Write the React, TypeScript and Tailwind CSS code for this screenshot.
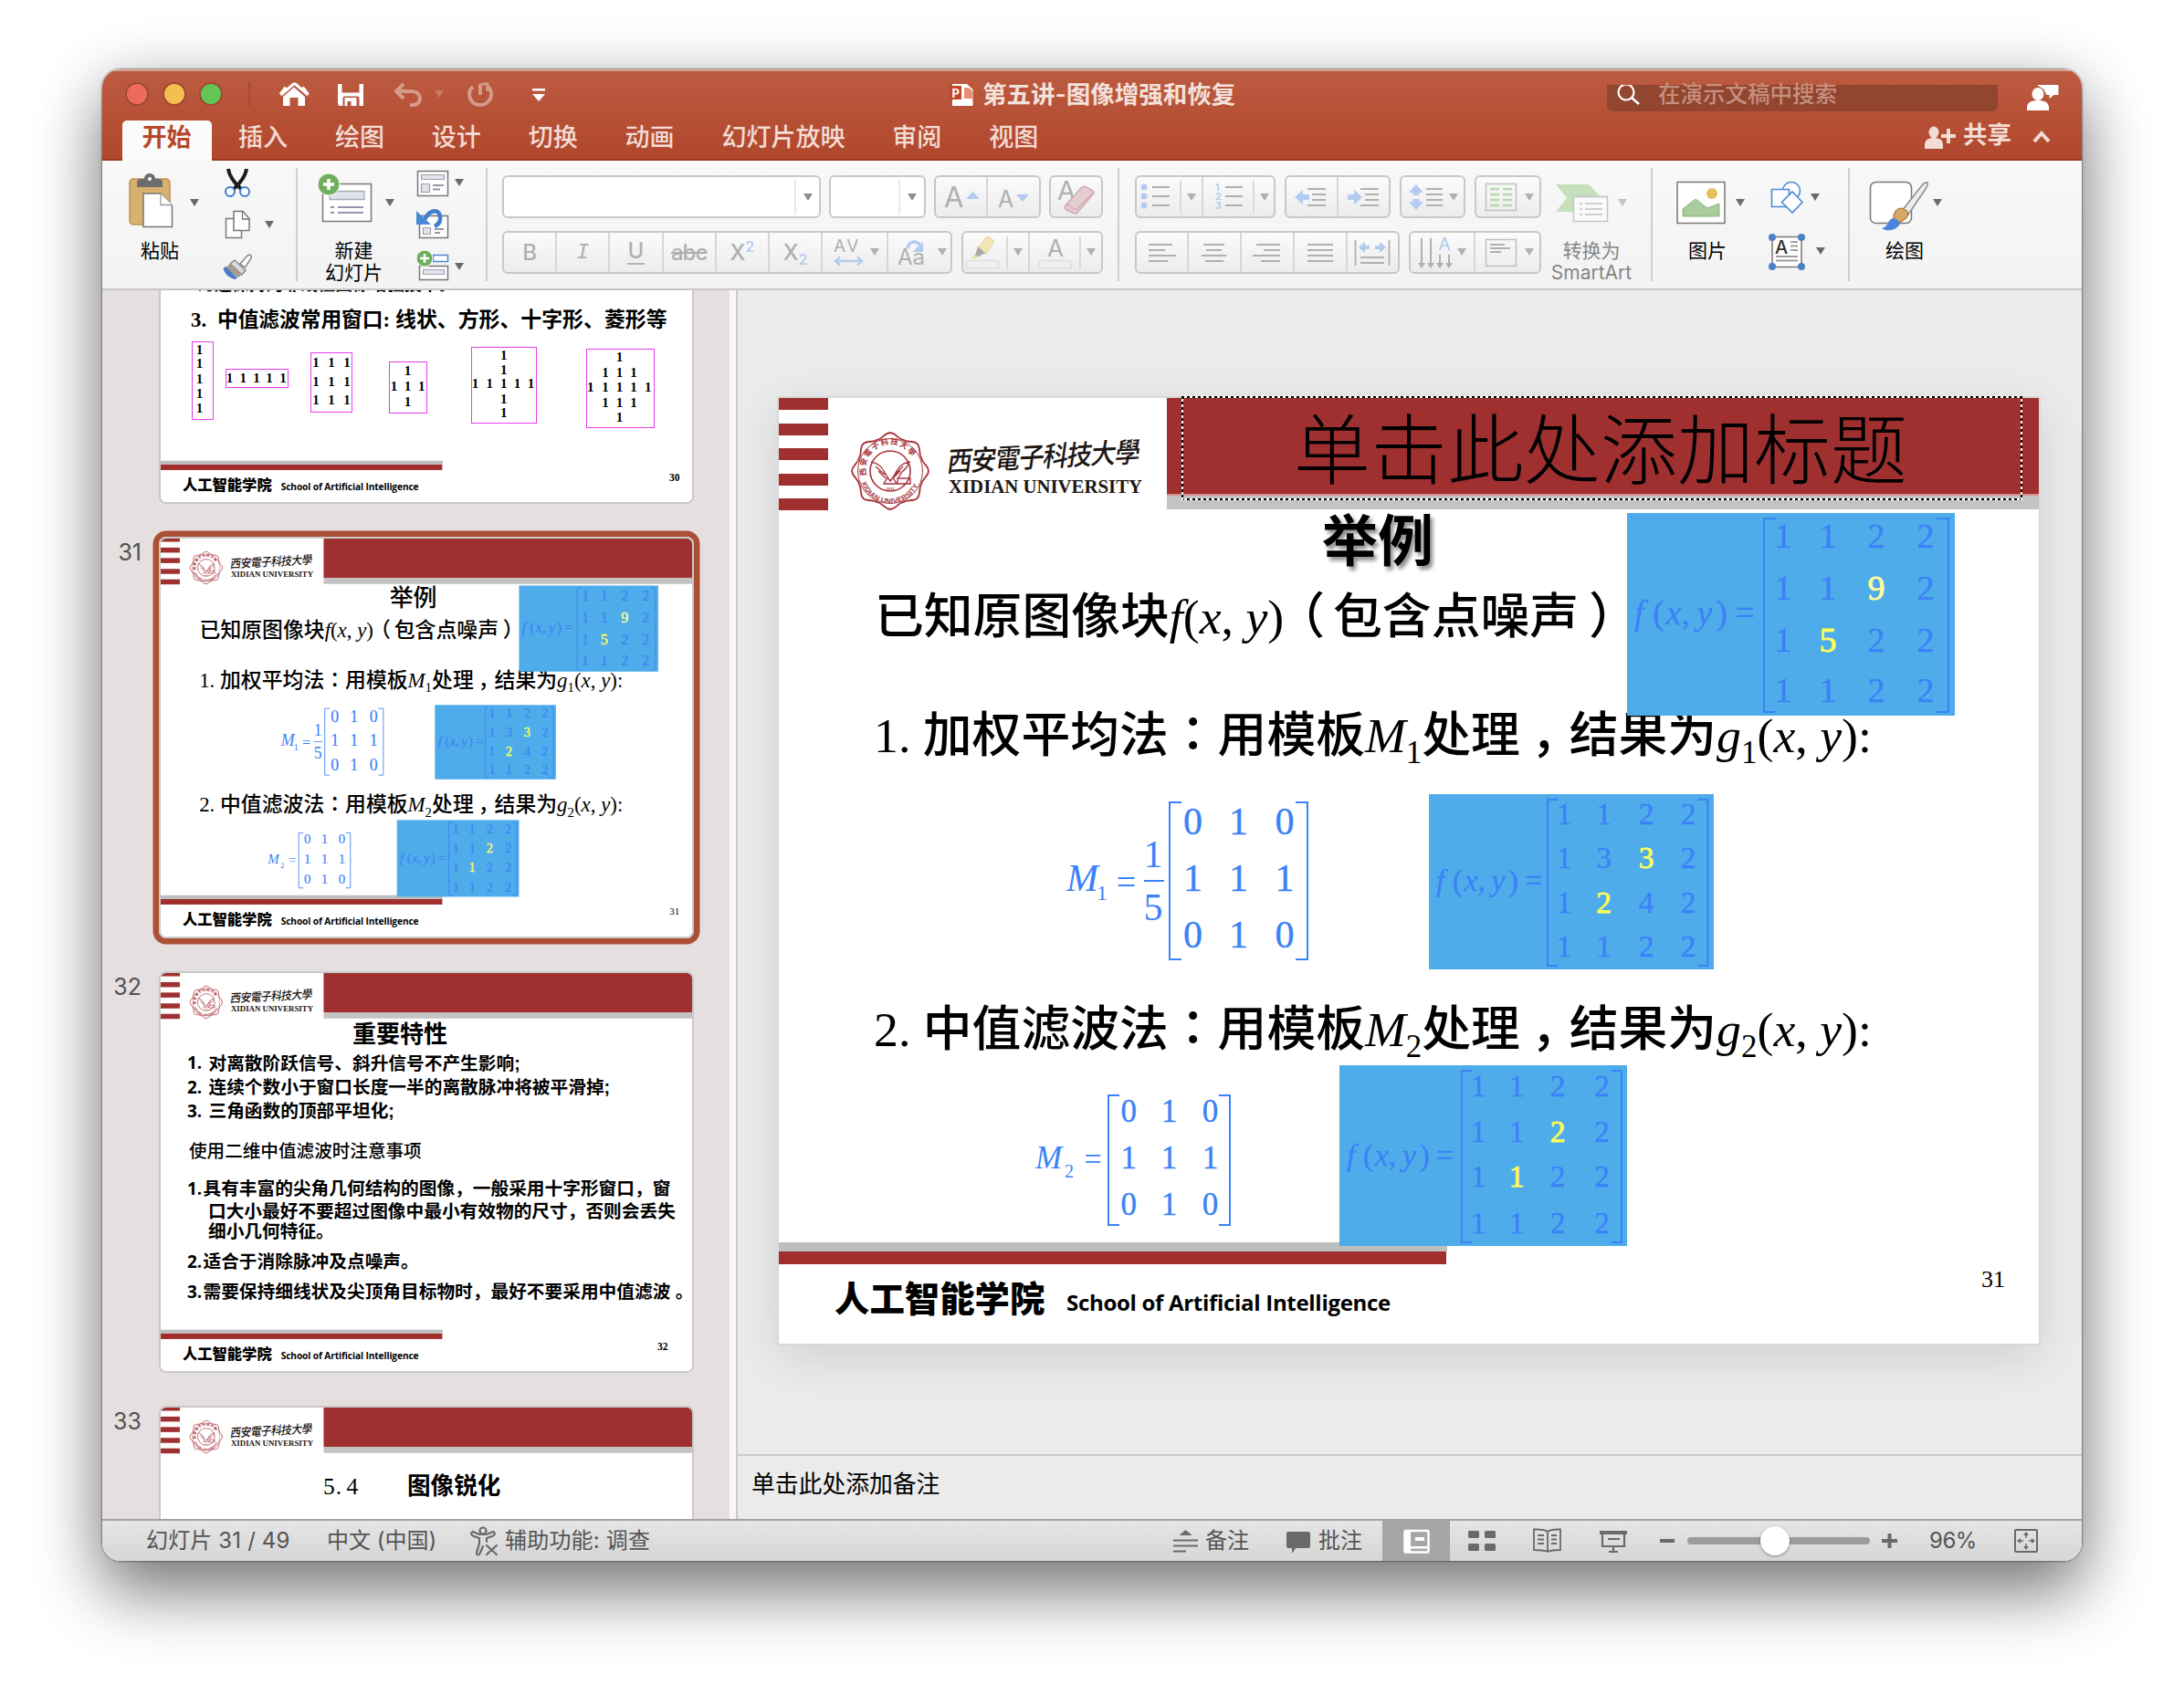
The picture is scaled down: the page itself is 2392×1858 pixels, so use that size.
import React from "react";

type Kids = { children?: React.ReactNode };

const SERIF = "font-['Liberation_Serif','Noto_Sans_CJK_SC',serif]";
const SANS = "font-['Liberation_Sans','Noto_Sans_CJK_SC',sans-serif]";
const UI = "font-['Inter','Noto_Sans_CJK_SC',sans-serif]";

/* ---------- helpers ---------- */

/** Icon whose view box is given in window coordinates. */
function Ic({ x, y, w, h, className = "", children }: Kids & { x: number; y: number; w: number; h: number; className?: string }) {
  return (
    <svg width={w} height={h} viewBox={`${x} ${y} ${w} ${h}`} className={`block shrink-0 ${className}`} fill="none">
      {children}
    </svg>
  );
}

function Tri({ x, y, s = 5, fill = "#6b6b6b" }: { x: number; y: number; s?: number; fill?: string }) {
  return <path d={`M${x - s} ${y - s + 1}h${s * 2}l${-s} ${s * 1.6}z`} fill={fill} />;
}

/** Text placed on the slide by its baseline. */
function Tx({ x, b, s, className = "", children }: Kids & { x: number; b: number; s: number; className?: string }) {
  return (
    <div className={`absolute whitespace-pre leading-none ${SERIF} ${className}`} style={{ left: x, top: b - s * 0.8375, fontSize: s }}>
      {children}
    </div>
  );
}

/** Text placed on the slide by its vertical centre. */
function Ct({ x, c, s, className = "", children }: Kids & { x: number; c: number; s: number; className?: string }) {
  return (
    <div className={`absolute whitespace-pre leading-none ${SANS} ${className}`} style={{ left: x, top: c - s * 0.4665, fontSize: s }}>
      {children}
    </div>
  );
}

/** A digit centred on a point. */
function Dg({ x, y, s, className = "", children }: Kids & { x: number; y: number; s: number; className?: string }) {
  return (
    <span
      className={`absolute -translate-x-1/2 -translate-y-1/2 leading-none font-['Liberation_Serif',serif] ${className}`}
      style={{ left: x, top: y, fontSize: s }}
    >
      {children}
    </span>
  );
}

/* ---------- slide content ---------- */

type MatrixProps = {
  rows: string[];
  xs: number[];
  ys: number[];
  s: number;
  box: [number, number, number, number];
  tick: number;
  marks?: Record<string, string>;
};

function Matrix({ rows, xs, ys, s, box, tick, marks = {} }: MatrixProps) {
  const [l, t, r, b] = box;
  return (
    <>
      <svg className="absolute overflow-visible" style={{ left: l, top: t }} width={r - l} height={b - t} fill="none" stroke="#3b82f7" strokeWidth="2">
        <path d={`M${tick} 1H1V${b - t - 1}H${tick}M${r - l - tick} 1H${r - l - 1}V${b - t - 1}H${r - l - tick}`} />
      </svg>
      {rows.map((row, j) =>
        row.split("").map((d, i) => (
          <Dg key={`${i}-${j}`} x={xs[i]} y={ys[j]} s={s} className={marks[`${i}${j}`] ?? "text-[#3b82f7] [-webkit-text-stroke:0.4px_#3b82f7]"}>
            {d}
          </Dg>
        )),
      )}
    </>
  );
}

function FXY({ x, b, s }: { x: number; b: number; s: number }) {
  return (
    <Tx x={x} b={b} s={s} className="text-[#3b82f7] [-webkit-text-stroke:0.3px_#3b82f7]">
      <i>f</i>
      <span className="ml-[0.25em]">(</span>
      <i className="ml-[0.05em]">x</i>
      <span>,</span>
      <i className="ml-[0.2em]">y</i>
      <span className="ml-[0.1em]">)</span>
      <span className="ml-[0.22em]">=</span>
    </Tx>
  );
}

function Seal() {
  const petals = Array.from({ length: 8 }, (_, k) => {
    const a = (k * Math.PI) / 4 - Math.PI / 2;
    const m = a + Math.PI / 8;
    const n = a + Math.PI / 4;
    const p = (r: number, t: number) => `${(43 + r * Math.cos(t)).toFixed(1)} ${(43 + r * Math.sin(t)).toFixed(1)}`;
    return `${k === 0 ? `M${p(42, a)}` : ""}C${p(42, a + 0.16)} ${p(36, m - 0.16)} ${p(37, m)}C${p(36, m + 0.16)} ${p(42, n - 0.16)} ${p(42, n)}`;
  }).join("");
  return (
    <svg className="absolute left-[79px] top-[37px]" width="86" height="86" viewBox="0 0 86 86" fill="none" stroke="#a8353b">
      <path d={petals} strokeWidth="1.8" />
      <circle cx="43" cy="43" r="35.5" strokeWidth="1" />
      <circle cx="43" cy="43" r="22" strokeWidth="1.6" />
      <path
        d="M22 33c6 1 11 4 14 10l4 7-4 7h14l-4-7 4-7c3-6 8-9 14-10l-3 6-5 5-5 8M27 38l10 9M30 43l8 8M57 38l-9 9M54 43l-7 7M40 50l3 4 3-4M51 51h14v6H51z"
        strokeWidth="1.4"
      />
      <defs>
        <path id="sealTop" d="M17 48a27 27 0 1 1 52 0" />
        <path id="sealBottom" d="M9.500 45a33.500 33.500 0 0 0 67 0" />
      </defs>
      <g fill="#a8353b" stroke="none">
        <text fontSize="8.500" fontWeight="700" fontFamily="'Noto Sans CJK TC',sans-serif" textLength="78">
          <textPath href="#sealTop">西安電子科技大學</textPath>
        </text>
        <text fontSize="7.800" fontWeight="700" fontFamily="'Liberation Sans',sans-serif" textLength="80">
          <textPath href="#sealBottom" startOffset="11">
            XIDIAN UNIVERSITY
          </textPath>
        </text>
        <text x="43" y="63.500" fontSize="4.500" fontWeight="700" textAnchor="middle" fontFamily="'Liberation Serif',serif">
          1931
        </text>
      </g>
    </svg>
  );
}

/** Slide master: header band, logo and footer on a 1380 x 1036 canvas. */
function Master({ children }: Kids) {
  return (
    <div className="relative h-[1036px] w-[1380px] overflow-hidden bg-white text-black">
      <div className="absolute left-0 top-0 flex w-[54px] flex-col gap-[14.5px]">
        {[0, 1, 2, 3, 4].map((k) => (
          <div key={k} className="h-[13px] bg-[#a03030]" />
        ))}
      </div>
      <Seal />
      <div className="absolute left-[185px] top-[41px] origin-center -skew-x-12 -rotate-3 scale-y-110 whitespace-nowrap font-['Noto_Sans_CJK_TC',sans-serif] text-[27.5px] font-medium leading-[42px] tracking-[-1.2px] text-[#1c1614]">
        西安電子科技大學
      </div>
      <Tx x={186} b={104.5} s={20.8} className="font-bold text-[#1c1614]">
        XIDIAN UNIVERSITY
      </Tx>
      <div className="absolute left-[425px] right-0 top-0 h-[106px] bg-[#a03030]" />
      <div className="absolute left-[425px] right-0 top-[106px] h-4 bg-[#c3c3c3]" />
      <div className="absolute left-0 top-[925px] h-2.5 w-[732px] bg-[#bebebe]" />
      <div className="absolute left-0 top-[935px] h-3.5 w-[731px] bg-[#a02e2c]" />
      <Ct x={61} c={986.5} s={38.4} className="font-black">
        人工智能学院
      </Ct>
      <div className="absolute left-[315px] top-[973px] whitespace-nowrap font-['Open_Sans',sans-serif] text-[24px] font-bold leading-[36px] tracking-[-0.3px]">
        School of Artificial Intelligence
      </div>
      {children}
    </div>
  );
}

function Sub({ children }: Kids) {
  return <span className="relative top-[12px] text-[35px] leading-none">{children}</span>;
}

function Line({ n, name, b }: { n: number; name: string; b: number }) {
  return (
    <Tx x={104} b={b} s={53.8} className="font-medium">
      {n}. {name}
      <span className="font-['Noto_Sans_CJK_TC',sans-serif] leading-[0]">：</span>用模板<i>M</i>
      <Sub>{n}</Sub>处理<span className="relative left-[12px]">，</span>结果为<i>g</i>
      <Sub>{n}</Sub>(<i>x</i>, <i>y</i>):
    </Tx>
  );
}

function Slide31({ editing = false }: { editing?: boolean }) {
  return (
    <Master>
      <Ct x={595} c={156.5} s={61} className={editing ? "font-bold [text-shadow:3px_4px_4px_rgba(0,0,0,0.45)]" : "font-medium"}>
        举例
      </Ct>
      <Tx x={105} b={259} s={53.8} className="font-medium">
        已知原图像块<i>f</i>(<i>x</i>, <i>y</i>)<span className="relative left-[-9px]">（</span>包含点噪声<span className="relative left-[11px]">）</span>
      </Tx>
      <Line n={1} name="加权平均法" b={389} />
      <Line n={2} name="中值滤波法" b={711} />

      <div className="absolute left-[929px] top-[126px] h-[222px] w-[359px] bg-[#4facea]" />
      <FXY x={937} b={248} s={38} />
      <Matrix
        rows={["1122", "1192", "1522", "1122"]}
        xs={[1100, 1149, 1202, 1256]}
        ys={[151, 208, 264.7, 320]}
        s={38}
        box={[1078, 131, 1282, 345]}
        tick={14}
        marks={{ "21": "text-[#ffff99] [-webkit-text-stroke:0.8px_#ffff99]", "12": "text-[#ffff55] [-webkit-text-stroke:0.8px_#ffff55]" }}
      />

      <div className="absolute left-[712px] top-[434px] h-[192px] w-[312px] bg-[#4facea]" />
      <FXY x={720} b={540} s={33.5} />
      <Matrix
        rows={["1122", "1332", "1242", "1122"]}
        xs={[860, 903.5, 950, 996]}
        ys={[456, 504.4, 553.4, 601]}
        s={33.5}
        box={[841, 439, 1018.5, 623]}
        tick={12}
        marks={{ "21": "text-[#ffff55] [-webkit-text-stroke:0.8px_#ffff55]", "12": "text-[#ffff55] [-webkit-text-stroke:0.8px_#ffff55]" }}
      />

      <div className="absolute left-[614px] top-[731px] h-[198px] w-[315px] bg-[#4facea]" />
      <FXY x={622} b={841.5} s={33.8} />
      <Matrix
        rows={["1122", "1122", "1122", "1122"]}
        xs={[766, 808, 853, 901.5]}
        ys={[754, 803.6, 853.4, 903.6]}
        s={33.5}
        box={[747, 736, 924, 926]}
        tick={12}
        marks={{ "21": "text-[#ffff55] [-webkit-text-stroke:0.8px_#ffff55]", "12": "text-[#ffff55] [-webkit-text-stroke:0.8px_#ffff55]" }}
      />

      <Tx x={315} b={540} s={42} className="text-[#3b82f7] italic">
        M
      </Tx>
      <Dg x={354} y={542} s={24} className="text-[#3b82f7]">
        1
      </Dg>
      <Dg x={380.5} y={530} s={38} className="text-[#3b82f7]">
        =
      </Dg>
      <Dg x={410} y={500} s={42} className="text-[#3b82f7]">
        1
      </Dg>
      <Dg x={410} y={558} s={42} className="text-[#3b82f7]">
        5
      </Dg>
      <div className="absolute left-[400px] top-[528px] h-[2px] w-[22px] bg-[#3b82f7]" />
      <Matrix rows={["010", "111", "010"]} xs={[453.6, 503.6, 554]} ys={[464, 525.7, 588]} s={42} box={[427, 442, 580, 616]} tick={14} />

      <Tx x={281} b={844} s={35} className="text-[#3b82f7] italic">
        M
      </Tx>
      <Dg x={318} y={847} s={20} className="text-[#3b82f7]">
        2
      </Dg>
      <Dg x={344} y={834} s={34} className="text-[#3b82f7]">
        =
      </Dg>
      <Matrix rows={["010", "111", "010"]} xs={[383.3, 427.4, 472.4]} ys={[781.3, 832.3, 883.3]} s={35} box={[360, 763, 495, 907]} tick={13} />

      <Tx x={1317} b={975} s={26}>
        31
      </Tx>

      {editing && (
        <>
          <div className="absolute left-[425px] right-0 top-[105px] h-[2px] bg-[#d98f8f]" />
          <Ct x={564} c={56} s={84} className="font-light">
            单击此处添加标题
          </Ct>
        </>
      )}
    </Master>
  );
}

function Placeholder() {
  return (
    <div className="absolute left-[441px] top-[-2px] h-[114px] w-[921px]">
      <div className="absolute inset-x-0 top-0 h-[2px] bg-[repeating-linear-gradient(90deg,#000_0_3px,#fff_3px_6px)]" />
      <div className="absolute inset-x-0 bottom-0 h-[2px] bg-[repeating-linear-gradient(90deg,#000_0_3px,#fff_3px_6px)]" />
      <div className="absolute inset-y-0 left-0 w-[2px] bg-[repeating-linear-gradient(180deg,#000_0_3px,#fff_3px_6px)]" />
      <div className="absolute inset-y-0 right-0 w-[2px] bg-[repeating-linear-gradient(180deg,#000_0_3px,#fff_3px_6px)]" />
    </div>
  );
}

function Thumb({ n, selected = false, slide, children }: Kids & { n: string; selected?: boolean; slide?: React.ReactNode }) {
  return (
    <div className="flex h-[440px] shrink-0">
      <div className={`w-[62px] pr-[19px] pt-[4px] text-right text-[25px] leading-[26px] text-[#545050] ${UI}`}>{n}</div>
      <div className={selected ? "relative rounded-[8px] shadow-[0_0_0_6.5px_#ac5035]" : "relative rounded-[8px]"}>
        <div className="relative h-[440px] w-[586px] overflow-hidden rounded-[8px] border-2 border-[#c9c9c9] bg-white">
          <div className="absolute -left-[2px] -top-[2px] h-[1036px] w-[1380px] origin-top-left scale-[0.4246]">{slide ?? <Master />}</div>
          {children}
        </div>
      </div>
    </div>
  );
}

const WINDOWS: { box: [number, number, number, number]; pts: [number, number][] }[] = [
  { box: [34, 260, 58, 346], pts: [[42.5, 268.7], [42.5, 284.3], [42.5, 301.3], [42.5, 317], [42.5, 333]] },
  { box: [71, 290, 140, 311], pts: [[75.5, 299.5], [90.2, 299.5], [105, 299.5], [119, 299.5], [134, 299.5]] },
  {
    box: [164, 272, 210, 338],
    pts: [170, 187, 204].flatMap((x) => [283.3, 303.7, 323.7].map((y) => [x, y] as [number, number])),
  },
  { box: [250, 282, 292, 339], pts: [[270.6, 292], [255.5, 309], [270.6, 309], [285.8, 309], [270.6, 326]] },
  {
    box: [340, 266, 412, 350],
    pts: [[375.8, 275], [375.8, 290.7], [344.6, 306.3], [360.2, 306.3], [375.8, 306.3], [390.5, 306.3], [405.6, 306.3], [375.8, 322.7], [375.8, 338.3]],
  },
  {
    box: [466, 268, 541, 355],
    pts: [
      [502.5, 277.3], [487, 294.3], [502.5, 294.3], [518, 294.3], [470.8, 310.3], [487, 310.3], [502.5, 310.3],
      [518, 310.3], [533.7, 310.3], [487, 327], [502.5, 327], [518, 327], [502.5, 342.7],
    ],
  },
];

function Slide30Body() {
  return (
    <>
      <Ct x={40} c={198} s={18.9} className="font-bold">
        为还保持的非线性图像增强技术。
      </Ct>
      <Tx x={33} b={245.500} s={22.8} className="font-bold">
        3.
      </Tx>
      <Tx x={62} b={245.500} s={22.7} className="font-bold">
        中值滤波常用窗口:
      </Tx>
      <Tx x={257} b={245.500} s={22.9} className="font-bold">
        线状、方形、十字形、菱形等
      </Tx>
      {WINDOWS.map((w, k) => (
        <React.Fragment key={k}>
          <div
            className="absolute border-[1.5px] border-[#e93cf0]"
            style={{ left: w.box[0], top: w.box[1], width: w.box[2] - w.box[0], height: w.box[3] - w.box[1] }}
          />
          {w.pts.map(([x, y], i) => (
            <Dg key={i} x={x} y={y} s={15} className="font-bold">
              1
            </Dg>
          ))}
        </React.Fragment>
      ))}
      <Tx x={557} b={414} s={11.5} className="font-bold">
        30
      </Tx>
    </>
  );
}

function Item({ n, x, c, children }: Kids & { n: string; x: number; c: number }) {
  return (
    <>
      <div className="absolute left-[29px] font-['Open_Sans',sans-serif] text-[19px] font-bold leading-none" style={{ top: c - 10 }}>
        {n}
      </div>
      <Ct x={x} c={c} s={19.7} className="font-bold">
        {children}
      </Ct>
    </>
  );
}

function Slide32Body() {
  return (
    <>
      <Ct x={210} c={66.5} s={26} className="font-bold">
        重要特性
      </Ct>
      <Item n="1." x={52.5} c={99}>对离散阶跃信号、斜升信号不产生影响;</Item>
      <Item n="2." x={52.5} c={125.5}>连续个数小于窗口长度一半的离散脉冲将被平滑掉;</Item>
      <Item n="3." x={52.5} c={151.5}>三角函数的顶部平坦化;</Item>
      <Ct x={31} c={195.5} s={19.6} className="font-medium">
        使用二维中值滤波时注意事项
      </Ct>
      <Item n="1." x={46.5} c={236.5}>具有丰富的尖角几何结构的图像，一般采用十字形窗口，窗</Item>
      <Ct x={52} c={261.5} s={19.7} className="font-bold">
        口大小最好不要超过图像中最小有效物的尺寸，否则会丢失
      </Ct>
      <Ct x={52} c={283.5} s={19.7} className="font-bold">
        细小几何特征。
      </Ct>
      <Item n="2." x={46.5} c={316.5}>适合于消除脉冲及点噪声。</Item>
      <Item n="3." x={46.5} c={349.5}>需要保持细线状及尖顶角目标物时，最好不要采用中值滤波 。</Item>
      <Tx x={544} b={414} s={11.5} className="font-bold">
        32
      </Tx>
    </>
  );
}

/* ---------- title bar and ribbon ---------- */

const TABS = ["插入", "绘图", "设计", "切换", "动画", "幻灯片放映", "审阅", "视图"];

function TitleBar() {
  return (
    <div className={`h-[100px] shrink-0 border-b-2 border-t-2 border-b-[#9a3a20] border-t-[#d9a08f] bg-linear-to-b from-[#bc5b40] to-[#b1472c] ${UI}`}>
      <div className="flex h-[50px] items-center">
        <div className="ml-[25px] flex w-[107px] justify-between">
          <div className="size-[26px] rounded-full border-2 border-[#9d4a33] bg-[#ed6a5f]" />
          <div className="size-[26px] rounded-full border-2 border-[#9d4a33] bg-[#f5bf4f]" />
          <div className="size-[26px] rounded-full border-2 border-[#9d4a33] bg-[#62c554]" />
        </div>
        <div className="ml-[28px] h-[26px] w-[2px] bg-[#a54a32]" />
        <Ic x={300} y={88} w={310} h={32} className="ml-[26px] mt-[2px]">
          <path d="M307.500 104l14-12h2l14 12M307 103.500l6-8M337.500 103.500l-6-8" stroke="#fff" strokeWidth="3" />
          <path d="M310 106l12-10.500L334 106v10h-7.500v-9h-9v9H310z" fill="#fff" />
          <path d="M370 92h4.500v9.500h19V92h4.500v24h-4.500v-8.500q0-2-2-2h-14q-2 0-2 2v8.500h-2.500q-3 0-3-3z" fill="#fff" />
          <path d="M377.500 107h13v9h-6v-5h-4v5h-3z" fill="#fff" />
          <g stroke="#d69a89" strokeWidth="4">
            <path d="M442 92l-8 8 8 8M435 100h15c13 0 13 15 2 15h-3" />
            <path d="M518 95c-8 7-3 20 8 20s17-14 7-21M526 92v12" />
          </g>
          <path d="M527 92h7v8" stroke="#d69a89" strokeWidth="3" />
          <path d="M476 99h10l-5 8z" fill="#c97a66" />
          <path d="M583 97h14v2.500h-14zM583 103h14l-7 8z" fill="#fff" />
        </Ic>
        <Ic x={1038} y={90} w={30} h={28} className="ml-[428px] mt-[2px]">
          <path d="M1043 92h16l6.500 6v18H1043z" fill="#fff" />
          <path d="M1056 96h3a6 6 0 0 1 6 6v6h-9z" fill="#e88d72" />
          <path d="M1040 94h13v15h-13z" fill="#c2452b" />
          <text x="1042.500" y="106.500" fontSize="13" fontWeight="700" fill="#fff" fontFamily="Inter,sans-serif">
            P
          </text>
        </Ic>
        <div className="ml-[8px] w-[290px] whitespace-nowrap text-[26.5px] font-semibold leading-none text-[#f3e1db]">第五讲-图像增强和恢复</div>
        <div className="ml-[394px] mt-[9px] flex h-[29px] w-[428px] items-center rounded-b-[6px] bg-[#92452f]">
          <Ic x={1770} y={92} w={26} h={26} className="ml-[10px] mt-[-3px]">
            <circle cx="1781" cy="100" r="8.500" stroke="#fff" strokeWidth="2.200" />
            <path d="M1787 106l8 7" stroke="#fff" strokeWidth="2.500" />
          </Ic>
          <span className="-mt-[9px] ml-[20px] whitespace-nowrap text-[24.5px] font-medium leading-none text-[#c68f80]">在演示文稿中搜索</span>
        </div>
        <Ic x={2216} y={90} w={42} h={32} className="ml-[28px] mt-[8px]">
          <path d="M2220 120v-3c0-6 5-8 12-8s12 2 12 8v3z" fill="#fff" />
          <ellipse cx="2232" cy="102" rx="6.500" ry="7" fill="#fff" />
          <path d="M2231 92h23.500v11h-5l-5 4v-4h-3l-3-6z" fill="#fff" />
        </Ic>
      </div>
      <div className="mt-[2px] flex h-[44px] items-start pl-[22px] text-[27px] leading-none text-[#f3dcd5]">
        <div className="mt-[2px] flex h-[44px] w-[98px] justify-center rounded-t-[5px] bg-[#fbfbfb] pr-[1px] pt-[5px] font-bold text-[#b7472a]">开始</div>
        <div className="ml-[29px] flex gap-[51.9px] pt-[7px] font-medium">
          {TABS.map((t) => (
            <span key={t} className="whitespace-nowrap">
              {t}
            </span>
          ))}
        </div>
        <div className="ml-auto flex items-center pr-[32px] pt-[4px]">
          <Ic x={2106} y={134} w={38} h={30}>
            <path d="M2108 163v-4c0-6 4-8 10-8s10 2 10 8v4z" fill="#f3dcd5" />
            <ellipse cx="2118" cy="145" rx="5.500" ry="6.500" fill="#f3dcd5" />
            <path d="M2126 149h16M2134 141v16" stroke="#f3dcd5" strokeWidth="4" />
          </Ic>
          <span className="-mt-[4px] ml-[6px] text-[26.5px] font-bold">共享</span>
          <Ic x={2224} y={140} w={24} h={22} className="ml-[21px]">
            <path d="M2228 157l8-9 8 9" stroke="#f3dcd5" strokeWidth="4" />
          </Ic>
        </div>
      </div>
    </div>
  );
}

function Sep() {
  return <div className="mt-[8px] h-[124px] w-[2px] shrink-0 bg-[#cfcfcf]" />;
}

function Box({ w, className = "", children }: Kids & { w: number; className?: string }) {
  return (
    <div
      className={`flex h-[47px] shrink-0 items-center overflow-hidden rounded-[6px] border-2 border-[#c8c8c8] bg-linear-to-b from-[#fbfbfb] to-[#ececec] ${className}`}
      style={{ width: w }}
    >
      {children}
    </div>
  );
}

function Key({ children, className = "" }: Kids & { className?: string }) {
  return (
    <span className={`flex h-full w-[58.2px] shrink-0 items-center justify-center border-r-2 border-[#d6d6d6] text-[24px] font-medium leading-none text-[#b0b0b0] ${className}`}>
      {children}
    </span>
  );
}

const G = "#b0b0b0";
const B = "#b3cbf0";

function Ribbon() {
  return (
    <div className={`flex h-[142px] shrink-0 border-b-2 border-[#c6c6c6] bg-linear-to-b from-[#f8f8f8] to-[#f3f3f3] text-[21px] leading-[24px] text-black ${UI}`}>
      {/* clipboard */}
      <div className="flex w-[212px] shrink-0">
        <div className="w-[120px] pt-[8px]">
          <Ic x={112} y={184} w={120} h={72}>
            <rect x="142" y="196" width="44" height="50" rx="4" fill="#d8b06f" stroke="#bf9350" strokeWidth="1.500" />
            <path d="M150 205v-5q0-4 5-4h3c0-8 12-8 12 0h3q5 0 5 4v5z" fill="#6d6d6d" />
            <circle cx="164" cy="196" r="2" fill="#fff" />
            <path d="M157 212h19l12.500 13v23.500H157z" fill="#fff" stroke="#777" strokeWidth="1.500" />
            <path d="M176 212v12.500h12.500" fill="#fff" stroke="#999" strokeWidth="1.300" />
            <Tri x={213} y={222} />
          </Ic>
          <div className="pl-[42px] pt-[7px]">粘贴</div>
        </div>
        <Ic x={240} y={180} w={64} h={130} className="ml-[8px] mt-[4px]">
          <path d="M250 185c1 8 5 12 9 17l9 9M270 185c-1 8-5 12-9 17l-9 9" stroke="#1c1c1c" strokeWidth="4" />
          <circle cx="252" cy="210" r="5" fill="#fff" stroke="#3f7acb" strokeWidth="2" />
          <circle cx="268" cy="210" r="5" fill="#fff" stroke="#3f7acb" strokeWidth="2" />
          <path d="M247.500 239.500h17v21h-17z" fill="#fff" stroke="#777" strokeWidth="1.500" />
          <path d="M256 231.500h10l7 8v13h-17z" fill="#fff" stroke="#777" strokeWidth="1.500" />
          <path d="M265.500 231.500v8.500h7.500" stroke="#777" strokeWidth="1.300" />
          <Tri x={295} y={246} />
          <path d="M263 289l8-9q4-2 4.500 2l-7 11z" fill="#fff" stroke="#888" strokeWidth="1.500" />
          <path d="M257 285l12 11-4 5-13-12z" fill="#d9d9d9" stroke="#8a8a8a" strokeWidth="1.500" />
          <path d="M252 289l13 12-4 3-14-11z" fill="#a79a90" />
          <path d="M247 292l13 12-2 2c-7-1-12-6-13.500-12z" fill="#4b7dc9" />
        </Ic>
      </div>
      <Sep />
      {/* slides */}
      <div className="flex w-[206px] shrink-0">
        <div className="w-[124px] pt-[8px]">
          <Ic x={326} y={184} w={124} h={72}>
            <path d="M353.500 201.500h53v41h-53z" fill="#fff" stroke="#777" strokeWidth="1.500" />
            <path d="M361 209.500h38v9h-38z" fill="#e1e3ea" stroke="#a9adba" strokeWidth="1.300" />
            <path d="M362 227h4M370 227h28M362 233h4M370 233h28" stroke="#9298ab" strokeWidth="2" />
            <circle cx="360" cy="202" r="12" fill="#6fae5c" stroke="#fff" strokeWidth="1" />
            <path d="M354 202h12M360 196v12" stroke="#fff" strokeWidth="3.500" />
            <Tri x={427} y={222} />
          </Ic>
          <div className="w-[123px] pt-[7px] text-center">
            新建
            <br />
            幻灯片
          </div>
        </div>
        <Ic x={450} y={180} w={64} h={130} className="mt-[4px]">
          <path d="M457.500 187.500h33v27h-33z" fill="#fff" stroke="#777" strokeWidth="1.500" />
          <path d="M461.500 191.500h25v5h-25zM461.500 201.500h9v9h-9z" fill="#e1e3ea" stroke="#9da2b0" strokeWidth="1.200" />
          <path d="M474 203h12M474 207.500h8" stroke="#9298ab" strokeWidth="2" />
          <Tri x={503} y={200} />
          <path d="M459.500 236.500h31v24h-31z" fill="#fff" stroke="#777" strokeWidth="1.500" />
          <path d="M463.500 249.500h8v7h-8z" fill="#e1e3ea" stroke="#9da2b0" strokeWidth="1.200" />
          <path d="M476 251h10M476 255h6" stroke="#9298ab" strokeWidth="2" />
          <path d="M465 241c4-10 15-14 17-4 1 6-2 9-6 11" stroke="#3f7fd0" strokeWidth="4.500" />
          <path d="M456 231v15h16z" fill="#4a88d8" />
          <path d="M474.500 279.500h16v7h-16z" fill="#fff" stroke="#4a88d8" strokeWidth="1.500" />
          <path d="M459.500 291.500h31v15h-31z" fill="#fff" stroke="#777" strokeWidth="1.500" />
          <path d="M463.500 295.500h23v5h-23z" fill="#e1e3ea" stroke="#9da2b0" strokeWidth="1.200" />
          <circle cx="465" cy="283" r="9" fill="#6fae5c" stroke="#fff" />
          <path d="M460 283h10M465 278v10" stroke="#fff" strokeWidth="2.500" />
          <Tri x={503} y={292} />
        </Ic>
      </div>
      <Sep />
      {/* font */}
      <div className="flex w-[690px] shrink-0 flex-col gap-[14px] pl-[16px] pt-[16px]">
        <div className="flex">
          <Box w={349} className="from-white to-white">
            <Ic x={870} y={193} w={27} h={46} className="ml-auto">
              <path d="M871 197v38" stroke="#e2e2e2" strokeWidth="1.500" />
              <Tri x={885} y={216} fill="#8d8d8d" />
            </Ic>
          </Box>
          <Box w={106} className="ml-[9px] from-white to-white">
            <Ic x={984} y={193} w={28} h={46} className="ml-auto">
              <path d="M985 197v38" stroke="#e2e2e2" strokeWidth="1.500" />
              <Tri x={999} y={216} fill="#8d8d8d" />
            </Ic>
          </Box>
          <Box w={117} className="ml-[9px]">
            <span className="ml-[9px] w-[21px] text-[31px] text-[#b0b0b0]">A</span>
            <Ic x={1055} y={194} w={27} h={44}>
              <path d="M1058 218l7.500-8 7.500 8z" fill={B} />
              <path d="M1081 194v44" stroke="#d6d6d6" strokeWidth="2" />
            </Ic>
            <span className="ml-[11px] mt-[5px] w-[18px] text-[25px] text-[#b0b0b0]">A</span>
            <Ic x={1111} y={194} w={20} h={44}>
              <path d="M1113 213h14l-7 8z" fill={B} />
            </Ic>
          </Box>
          <Box w={59} className="ml-[9px]">
            <Ic x={1151} y={194} w={55} h={44}>
              <text x="1158" y="219" fontSize="29" fill={G} fontFamily="Inter,sans-serif">
                A
              </text>
              <path d="M1167 225l17-19q3-3 6-1l7 4q2 2 0 4l-17 20q-2 2-5 0l-7-3q-3-2-1-5z" fill="#e6cdd2" stroke="#cfabb3" strokeWidth="1.500" />
              <path d="M1168 224l11 6 18-19" stroke="#cfabb3" strokeWidth="1.200" />
            </Ic>
          </Box>
        </div>
        <div className="flex">
          <Box w={493}>
            <Key className="font-bold">B</Key>
            <Key className="italic font-['Liberation_Mono',monospace]">I</Key>
            <Key>
              <span className="border-b-2 border-[#b3b3b3] px-[1px] pb-[1px]">U</span>
            </Key>
            <Key className="line-through text-[22px] tracking-[-1px]">abc</Key>
            <Key>
              X<span className="-mt-[14px] text-[16px] text-[#b3cbf0]">2</span>
            </Key>
            <Key>
              X<span className="mt-[14px] text-[16px] text-[#b3cbf0]">2</span>
            </Key>
            <Ic x={900} y={254} w={141} h={44}>
              <text x="912" y="275" fontSize="19" fill={G} fontFamily="Inter,sans-serif" letterSpacing="2.5">
                AV
              </text>
              <path d="M915 285h27M919 280.500l-5 4.500 5 4.500M938 280.500l5 4.500-5 4.500" stroke={B} strokeWidth="2.500" />
              <Tri x={957} y={275} fill={G} />
              <path d="M971 254v44" stroke="#d6d6d6" strokeWidth="2" />
              <text x="982" y="289" fontSize="24" fill={G} fontFamily="Inter,sans-serif">
                Aa
              </text>
              <path d="M993 271c1-8 11-10 15-1" stroke={B} strokeWidth="3.500" />
              <path d="M1010 264v11h-12z" fill={B} />
              <Tri x={1031} y={275} fill={G} />
            </Ic>
          </Box>
          <Box w={155} className="ml-[10px]">
            <Ic x={1055} y={254} w={151} h={44}>
              <path d="M1072 270l9-12 8 5-8 13-5 1z" fill="#f3e6b4" stroke="#ddcf9b" />
              <path d="M1071 269l8 7-7 4-4-1z" fill="#aaa" />
              <path d="M1067 278l5 3-8 1z" fill="#ecd98f" />
              <rect x="1058.500" y="284.500" width="35" height="8.500" rx="1.500" fill="#efefef" stroke="#dedede" strokeWidth="1.500" />
              <path d="M1103 258v36M1183 258v36" stroke="#dadada" strokeWidth="2" />
              <path d="M1127 254v44" stroke="#d6d6d6" strokeWidth="2" />
              <Tri x={1115} y={275} fill={G} />
              <Tri x={1195} y={275} fill={G} />
              <text x="1147" y="280" fontSize="26" fill={G} fontFamily="Inter,sans-serif">
                A
              </text>
              <rect x="1138.500" y="284.500" width="35" height="8.500" rx="1.500" fill="#efefef" stroke="#dedede" strokeWidth="1.500" />
            </Ic>
          </Box>
        </div>
      </div>
      <Sep />
      {/* paragraph */}
      <div className="flex w-[582px] shrink-0">
        <div className="flex w-[462px] flex-col gap-[14px] pl-[17px] pt-[16px]">
          <div className="flex">
            <Box w={154}>
              <Ic x={1245} y={194} w={150} h={44}>
                {[205, 215, 225].map((y) => (
                  <React.Fragment key={y}>
                    <circle cx="1253" cy={y} r="3.500" fill={B} />
                    <path d={`M1262 ${y}h19M1342 ${y}h19`} stroke={G} strokeWidth="2" />
                  </React.Fragment>
                ))}
                <g fontSize="10.500" fontWeight="700" fill={B} fontFamily="Inter,sans-serif">
                  <text x="1331" y="209">1</text>
                  <text x="1331" y="219">2</text>
                  <text x="1331" y="229">3</text>
                </g>
                <path d="M1293 198v36M1373 198v36" stroke="#dadada" strokeWidth="2" />
                <path d="M1317 194v44" stroke="#d6d6d6" strokeWidth="2" />
                <Tri x={1305} y={216} fill={G} />
                <Tri x={1385} y={216} fill={G} />
              </Ic>
            </Box>
            <Box w={116} className="ml-[10px]">
              <Ic x={1409} y={194} w={112} h={44}>
                <path d="M1432 207h20M1437 213h15M1437 219h15M1432 225h20M1490 207h20M1495 213h15M1495 219h15M1490 225h20" stroke={G} strokeWidth="2" />
                <path d="M1418 216l9-8v5h7v6h-7v5zM1492 216l-9-8v5h-7v6h7v5z" fill={B} />
                <path d="M1465 194v44" stroke="#d6d6d6" strokeWidth="2" />
              </Ic>
            </Box>
            <Box w={72} className="ml-[10px]">
              <Ic x={1535} y={194} w={68} h={44}>
                <path d="M1543 211l8-9 8 9h-4.500v3h-7v-3zM1543 221l8 9 8-9h-4.500v-3h-7v3z" fill={B} />
                <path d="M1562 207h18M1562 213h18M1562 219h18M1562 225h18" stroke={G} strokeWidth="2" />
                <Tri x={1592} y={216} fill={G} />
              </Ic>
            </Box>
            <Box w={73} className="ml-[10px]">
              <Ic x={1617} y={194} w={69} h={44}>
                <path d="M1627.500 201.500h33v29h-33z" stroke="#c0c0c0" strokeWidth="1.500" />
                <path d="M1632 207h10M1632 213h10M1632 219h10M1632 225h10M1646 207h10M1646 213h10M1646 219h10M1646 225h10" stroke="#b9d8ae" strokeWidth="2.500" />
                <Tri x={1675} y={216} fill={G} />
              </Ic>
            </Box>
          </div>
          <div className="flex">
            <Box w={290}>
              <Ic x={1245} y={254} w={286} h={44}>
                <path
                  d="M1258 267h26M1258 273h18M1258 279h30M1258 285h21M1318 267h23M1321 273h17M1316 279h27M1320 285h20M1376 267h26M1384 273h18M1372 279h30M1381 285h21M1432 267h28M1432 273h28M1432 279h28M1432 285h28M1490 281h26M1490 287h26"
                  stroke={G}
                  strokeWidth="2"
                />
                <path d="M1484.500 262v28M1521.500 262v28" stroke={G} strokeWidth="1.800" />
                <path d="M1488 270l7-6v4h5v4h-5v4zM1518 270l-7-6v4h-5v4h5v4z" fill={B} />
                <path d="M1301 254v44M1359 254v44M1417 254v44M1475 254v44" stroke="#d6d6d6" strokeWidth="2" />
              </Ic>
            </Box>
            <Box w={145} className="ml-[10px]">
              <Ic x={1545} y={254} w={141} h={44}>
                <path d="M1557 260v30M1567 260v30M1577 278v12M1587 278v12" stroke={G} strokeWidth="2" />
                <path d="M1553 287h8l-4 6zM1563 287h8l-4 6zM1573 287h8l-4 6zM1583 287h8l-4 6z" fill={G} />
                <text x="1575.500" y="273" fontSize="19" fill={B} fontFamily="Inter,sans-serif">
                  A
                </text>
                <Tri x={1601} y={275} fill={G} />
                <path d="M1615 254v44" stroke="#d6d6d6" strokeWidth="2" />
                <path d="M1627.500 261.500h33v29h-33z" stroke="#c0c0c0" strokeWidth="1.500" />
                <path d="M1632 267h16M1632 271h22M1632 275h12" stroke={G} strokeWidth="2" />
                <Tri x={1675} y={275} fill={G} />
              </Ic>
            </Box>
          </div>
        </div>
        <div className="w-[120px] pt-[8px] text-[#858585]">
          <Ic x={1688} y={184} w={120} h={72}>
            <path d="M1704 202h36l13 14v16h-49l12-15z" fill="#c6dfbd" />
            <path d="M1723.500 215.500h37v27h-37z" fill="#fafafa" stroke="#c4c4c4" strokeWidth="1.500" />
            <path d="M1730 223h3M1736 223h19M1730 229h3M1736 229h19M1730 235h3M1736 235h19" stroke="#cfcfcf" strokeWidth="2" />
            <Tri x={1777} y={222} fill="#c2c2c2" />
          </Ic>
          <div className="w-[110px] pt-[7px] text-center">
            转换为
            <br />
            <span>SmartArt</span>
          </div>
        </div>
      </div>
      <Sep />
      {/* insert */}
      <div className="flex w-[214px] shrink-0">
        <div className="w-[118px] pt-[8px]">
          <Ic x={1810} y={184} w={118} h={72}>
            <path d="M1837 199.500h52v45h-52z" fill="#fff" stroke="#777" strokeWidth="1.500" />
            <path d="M1843 237v-8l14-11 13 10 13-5v14z" fill="#a9cc9c" stroke="#8ab37c" strokeWidth="1" />
            <circle cx="1875" cy="212" r="6" fill="#e6c15a" />
            <Tri x={1906} y={222} />
          </Ic>
          <div className="pl-[39px] pt-[7px]">图片</div>
        </div>
        <Ic x={1930} y={184} w={76} h={120} className="ml-[2px] mt-[8px]">
          <circle cx="1962" cy="209" r="9.500" fill="#fff" stroke="#4a88d8" strokeWidth="1.600" />
          <path d="M1940.500 207.500h19v19h-19z" fill="#fff" stroke="#4a88d8" strokeWidth="1.600" />
          <path d="M1963 210l11 11.500-11 11.500-11.500-11.500z" fill="#fff" stroke="#4a88d8" strokeWidth="1.600" />
          <Tri x={1988} y={216} />
          <path d="M1941 259.500h32v33h-32z" fill="#fff" stroke="#777" strokeWidth="1.500" />
          <text x="1944" y="278" fontSize="20" fontWeight="500" fill="#333" fontFamily="Inter,sans-serif">
            A
          </text>
          <path d="M1961 265h8M1961 269.500h8M1961 274h8M1945 281h24M1945 285.500h24" stroke="#a0a0a0" strokeWidth="1.800" />
          <g fill="#4c7fc4">
            <circle cx="1941" cy="260" r="4" />
            <circle cx="1973" cy="260" r="4" />
            <circle cx="1941" cy="292" r="4" />
            <circle cx="1973" cy="292" r="4" />
          </g>
          <Tri x={1994} y={275} />
        </Ic>
      </div>
      <Sep />
      {/* draw */}
      <div className="w-[130px] pt-[8px]">
        <Ic x={2026} y={184} w={130} h={72}>
          <rect x="2048.500" y="199.500" width="45" height="45" rx="6" fill="#fff" stroke="#777" strokeWidth="1.500" />
          <path d="M2083 231l22-28q4-4 6-3 1 2-2 7l-19 28z" fill="#ededed" stroke="#8b8b8b" strokeWidth="1.500" />
          <path d="M2074 239c0-8 6-13 11-10 6 2 6 8 1 11l-5 4z" fill="#d7a867" stroke="#a77a3c" strokeWidth="1.300" />
          <path d="M2061 250c7-1 6-9 12-11 5 1 8 4 8 6-4 8-14 9-20 5z" fill="#4a86dc" />
          <Tri x={2122} y={222} />
        </Ic>
        <div className="pl-[39px] pt-[7px]">绘图</div>
      </div>
    </div>
  );
}

/* ---------- status bar ---------- */

const D = "#6a6a6a";

function StatusBar() {
  return (
    <div className={`flex h-[46px] shrink-0 items-center border-t-2 border-[#a3a3a3] bg-linear-to-b from-[#e5e5e5] to-[#d6d6d6] text-[24px] leading-none text-[#545454] ${UI}`}>
      <span className="ml-[48px] w-[198px] whitespace-nowrap tracking-[0.15px]">幻灯片 31 / 49</span>
      <span className="w-[155px] whitespace-nowrap">中文 (中国)</span>
      <Ic x={513} y={1668} w={36} h={38}>
        <g stroke={D} strokeWidth="2.200" strokeLinecap="round">
          <circle cx="529" cy="1676" r="3.500" />
          <path d="M518 1677c-3 1-2 4 1 5l6 2v6l-3 10c0 3 3 3 4 0l3-7M540 1677c3 1 2 4-1 5l-6 2v4M518 1677l7 3h8l7-3" />
          <path d="M533 1692l11 10M544 1692l-11 10" />
        </g>
      </Ic>
      <span className="ml-[4px] whitespace-nowrap tracking-[0.2px]">辅助功能: 调查</span>
      <div className="ml-auto flex h-full items-center">
        <Ic x={1284} y={1668} w={30} h={36}>
          <path d="M1298.500 1674l7 6h-14z" fill={D} />
          <path d="M1285 1685.500h27M1285 1691.500h27M1285 1697.500h14" stroke={D} strokeWidth="2.200" />
        </Ic>
        <span className="ml-[6px] w-[87px] whitespace-nowrap">备注</span>
        <Ic x={1408} y={1668} w={30} h={36}>
          <path d="M1412 1676h22q2 0 2 2v14q0 2-2 2h-14l-4 6v-6h-4q-2 0-2-2v-14q0-2 2-2z" fill={D} />
        </Ic>
        <span className="ml-[7px] w-[70px] whitespace-nowrap">批注</span>
        <div className="flex h-full w-[74px] items-center justify-center bg-[#a6a6a6]">
          <Ic x={1535} y={1670} w={32} h={32}>
            <rect x="1538.500" y="1675" width="26" height="23.500" rx="1" stroke="#fff" strokeWidth="2.500" />
            <path d="M1538 1675h7v24h-7zM1544 1692h21v2.500h-21zM1550 1682h10v4h-10z" fill="#fff" />
          </Ic>
        </div>
        <Ic x={1588} y={1666} w={260} h={42}>
          <g fill={D}>
            <rect x="1608" y="1676" width="12" height="8" rx="1.500" />
            <rect x="1626" y="1676" width="12" height="8" rx="1.500" />
            <rect x="1608" y="1690" width="12" height="8" rx="1.500" />
            <rect x="1626" y="1690" width="12" height="8" rx="1.500" />
            <path d="M1752 1676h30v4h-30z" />
          </g>
          <path
            d="M1695 1677c-4-3-9-2.500-15-2.500v22.500c6 0 11 0 15 2 4-2 9-2 14-2v-22.500c-5 0-10-.5-14 2.500zM1695 1677v21M1684 1681h7M1684 1685.500h7M1684 1690h7M1699 1681h6M1699 1685.500h6M1699 1690h6"
            stroke={D}
            strokeWidth="1.800"
          />
          <path d="M1755 1680v13h24v-13M1761 1685h13M1767 1693v6M1762 1699h10" stroke={D} strokeWidth="2.200" />
          <path d="M1818 1687h16" stroke={D} strokeWidth="4" />
        </Ic>
        <div className="relative h-[8px] w-[200px] rounded-full bg-[#9c9c9c]">
          <div className="absolute left-[80px] top-[-12px] size-[32px] rounded-full bg-white shadow-[0_1px_3px_rgba(0,0,0,0.4)]" />
        </div>
        <Ic x={2048} y={1670} w={40} h={34}>
          <path d="M2061 1687h17M2069.500 1679v16" stroke={D} strokeWidth="4" />
        </Ic>
        <span className="ml-[25px] w-[91px] tracking-[-0.5px]">96%</span>
        <Ic x={2204} y={1670} w={30} h={34} className="mr-[46px]">
          <rect x="2207" y="1675" width="24" height="24" rx="1" stroke={D} strokeWidth="2" />
          <path d="M2219 1677l3 4h-6zM2219 1697l3-4h-6zM2209 1687l4-3v6zM2229 1687l-4-3v6z" fill={D} />
          <path d="M2219 1680v4M2219 1690v4M2212 1687h4M2222 1687h4" stroke={D} strokeWidth="1.500" />
        </Ic>
      </div>
    </div>
  );
}

export default function App() {
  return (
    <div className="h-[1858px] w-[2392px] overflow-hidden bg-white pl-[112px] pt-[76px]">
      <div className="h-[1634px] w-[2168px] rounded-[20px] shadow-[0_0_2px_1px_rgba(0,0,0,0.35),0_36px_72px_rgba(0,0,0,0.46),0_8px_70px_rgba(0,0,0,0.16)]">
        <div className="flex h-full flex-col overflow-hidden rounded-[20px] bg-[#ebebeb]">
          <TitleBar />
          <Ribbon />
          <div className="flex h-[1346px] shrink-0">
            <div className="flex w-[687px] shrink-0 flex-col gap-[36px] overflow-hidden bg-[#e5dfdf]">
              <div className="-mt-[206px] shrink-0">
                <Thumb n="30">
                  <Slide30Body />
                </Thumb>
              </div>
              <Thumb n="31" selected slide={<Slide31 />} />
              <Thumb n="32">
                <Slide32Body />
              </Thumb>
              <Thumb n="33">
                <Tx x={178} b={95} s={25.5} className="font-medium">
                  5<span className="inline-block w-[12.750px] pl-[1px]">.</span>4
                </Tx>
                <Ct x={270} c={86} s={25.6} className="font-bold">
                  图像锐化
                </Ct>
              </Thumb>
            </div>
            <div className="w-[7px] shrink-0 bg-[#f7f7f7]" />
            <div className="w-[2px] shrink-0 bg-[#cacaca]" />
            <div className="flex min-w-0 flex-1 flex-col">
              <div className="h-[1275px] shrink-0 overflow-hidden pl-[45px] pt-[118px]">
                <div className="relative h-[1036px] w-[1380px] shadow-[0_0_0_2px_#d8d8d8,0_14px_50px_rgba(0,0,0,0.12)]">
                  <Slide31 editing />
                  <Placeholder />
                </div>
              </div>
              <div className="flex-1 border-t-2 border-[#c9c9c9] pl-[15px] pt-[19px]">
                <p className={`text-[25.8px] font-normal leading-none text-black ${SANS}`}>单击此处添加备注</p>
              </div>
            </div>
          </div>
          <StatusBar />
        </div>
      </div>
    </div>
  );
}
